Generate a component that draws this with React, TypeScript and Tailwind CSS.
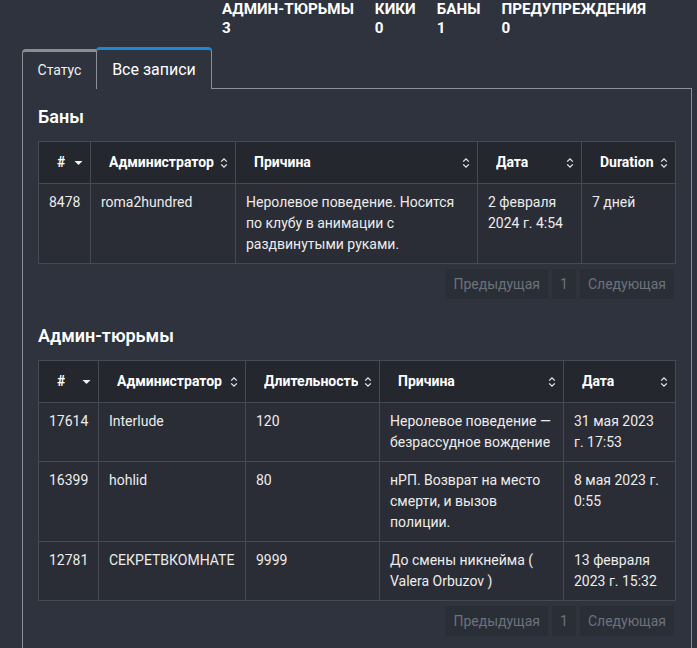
import type { ReactNode } from 'react'

type Col = { title: string; width: number; sort: 'desc' | 'none' }

const banCols: Col[] = [
  { title: '#', width: 52, sort: 'desc' },
  { title: 'Администратор', width: 145, sort: 'none' },
  { title: 'Причина', width: 242, sort: 'none' },
  { title: 'Дата', width: 104, sort: 'none' },
  { title: 'Duration', width: 94, sort: 'none' },
]

const bans = [['8478', 'roma2hundred', 'Неролевое поведение. Носится по клубу в анимации с раздвинутыми руками.', '2 февраля 2024 г. 4:54', '7 дней']]

const jailCols: Col[] = [
  { title: '#', width: 60, sort: 'desc' },
  { title: 'Администратор', width: 147, sort: 'none' },
  { title: 'Длительность', width: 134, sort: 'none' },
  { title: 'Причина', width: 184, sort: 'none' },
  { title: 'Дата', width: 112, sort: 'none' },
]

const jails = [
  ['17614', 'Interlude', '120', 'Неролевое поведение — безрассудное вождение', '31 мая 2023 г. 17:53'],
  ['16399', 'hohlid', '80', 'нРП. Возврат на место смерти, и вызов полиции.', '8 мая 2023 г. 0:55'],
  ['12781', 'СЕКРЕТВКОМНАТЕ', '9999', 'До смены никнейма ( Valera Orbuzov )', '13 февраля 2023 г. 15:32'],
]

const stats = [
  ['АДМИН-ТЮРЬМЫ', '3'],
  ['КИКИ', '0'],
  ['БАНЫ', '1'],
  ['ПРЕДУПРЕЖДЕНИЯ', '0'],
]

function SortIcon({ sort }: { sort: Col['sort'] }) {
  if (sort === 'desc') {
    return (
      <svg width="9" height="6" viewBox="0 0 9 6" className="shrink-0">
        <path d="M0.5 1h8L4.5 5z" fill="#f2f2f2" />
      </svg>
    )
  }
  return (
    <svg width="8" height="12" viewBox="0 0 8 12" className="shrink-0">
      <path d="M1.2 4.6L4 1.8l2.8 2.8M1.2 7.4L4 10.2l2.8-2.8" fill="none" stroke="#e8e8e8" strokeWidth="1.3" />
    </svg>
  )
}

function DataTable({ cols, rows }: { cols: Col[]; rows: string[][] }) {
  return (
    <table className="w-full table-fixed border-collapse text-[14px]">
      <colgroup>
        {cols.map((c) => (
          <col key={c.title} style={{ width: c.width }} />
        ))}
      </colgroup>
      <thead>
        <tr className="bg-[#24272e]">
          {cols.map((c) => (
            <th key={c.title} className="border border-[#464a52] py-[10px] pl-[18px] pr-[7px] text-left font-bold leading-[21px] text-white">
              <div className="flex items-center justify-between gap-1">
                <span className="truncate">{c.title}</span>
                <SortIcon sort={c.sort} />
              </div>
            </th>
          ))}
        </tr>
      </thead>
      <tbody>
        {rows.map((r) => (
          <tr key={r[0]} className="bg-[#2a2d35]">
            {r.map((v, i) => (
              <td key={i} className="border border-[#464a52] px-[10px] py-2 align-top leading-[21px] text-[#ececec]">
                {v}
              </td>
            ))}
          </tr>
        ))}
      </tbody>
    </table>
  )
}

function Pager() {
  const btn = 'h-[30px] rounded-[2px] bg-[#2a2e37] text-[14px] leading-[30px] text-[#6d727b]'
  return (
    <div className="mt-[5px] flex justify-end gap-[4px] pr-[2px]">
      <span className={`${btn} px-2`}>Предыдущая</span>
      <span className={`${btn} w-[24px] text-center`}>1</span>
      <span className={`${btn} px-2`}>Следующая</span>
    </div>
  )
}

function Section({ title, className, children }: { title: string; className?: string; children: ReactNode }) {
  return (
    <section className={className}>
      <h2 className="mb-3 text-[18px] font-semibold leading-[24px] text-white">{title}</h2>
      {children}
    </section>
  )
}

export default function App() {
  return (
    <div className="h-[648px] w-full overflow-hidden bg-[#2e333d] font-['Roboto',sans-serif]">
      <div className="flex gap-[21px] pl-[222px]">
        {stats.map(([label, val]) => (
          <div key={label} className="text-[15.2px] font-bold leading-[19px] text-white">
            <div>{label}</div>
            <div>{val}</div>
          </div>
        ))}
      </div>

      <div className="ml-[22px] mr-[5px] mt-[9px]">
        {/* tab strip */}
        <div className="flex items-end">
          <div className="flex h-[40px] w-[74px] items-center justify-center rounded-tl-[4px] border-l border-t-[3px] border-l-[#8b9099] border-t-[#8d8d8d] text-[14px] text-[#f0f0f0]">
            Статус
          </div>
          <div className="flex h-[42px] w-[116px] items-center justify-center rounded-t-[4px] border-x border-t-[3px] border-x-[#8b9099] border-t-[#1b8ad3] text-[16px] text-white">
            Все записи
          </div>
          <div className="flex-1 border-b border-[#8b9099]" />
        </div>

        <div className="border-x border-[#8b9099] px-[15px] pt-4">
          <Section title="Баны">
            <DataTable cols={banCols} rows={bans} />
            <Pager />
          </Section>

          <Section title="Админ-тюрьмы" className="mt-[25px]">
            <DataTable cols={jailCols} rows={jails} />
            <Pager />
          </Section>
          <div className="h-10" />
        </div>
      </div>
    </div>
  )
}
